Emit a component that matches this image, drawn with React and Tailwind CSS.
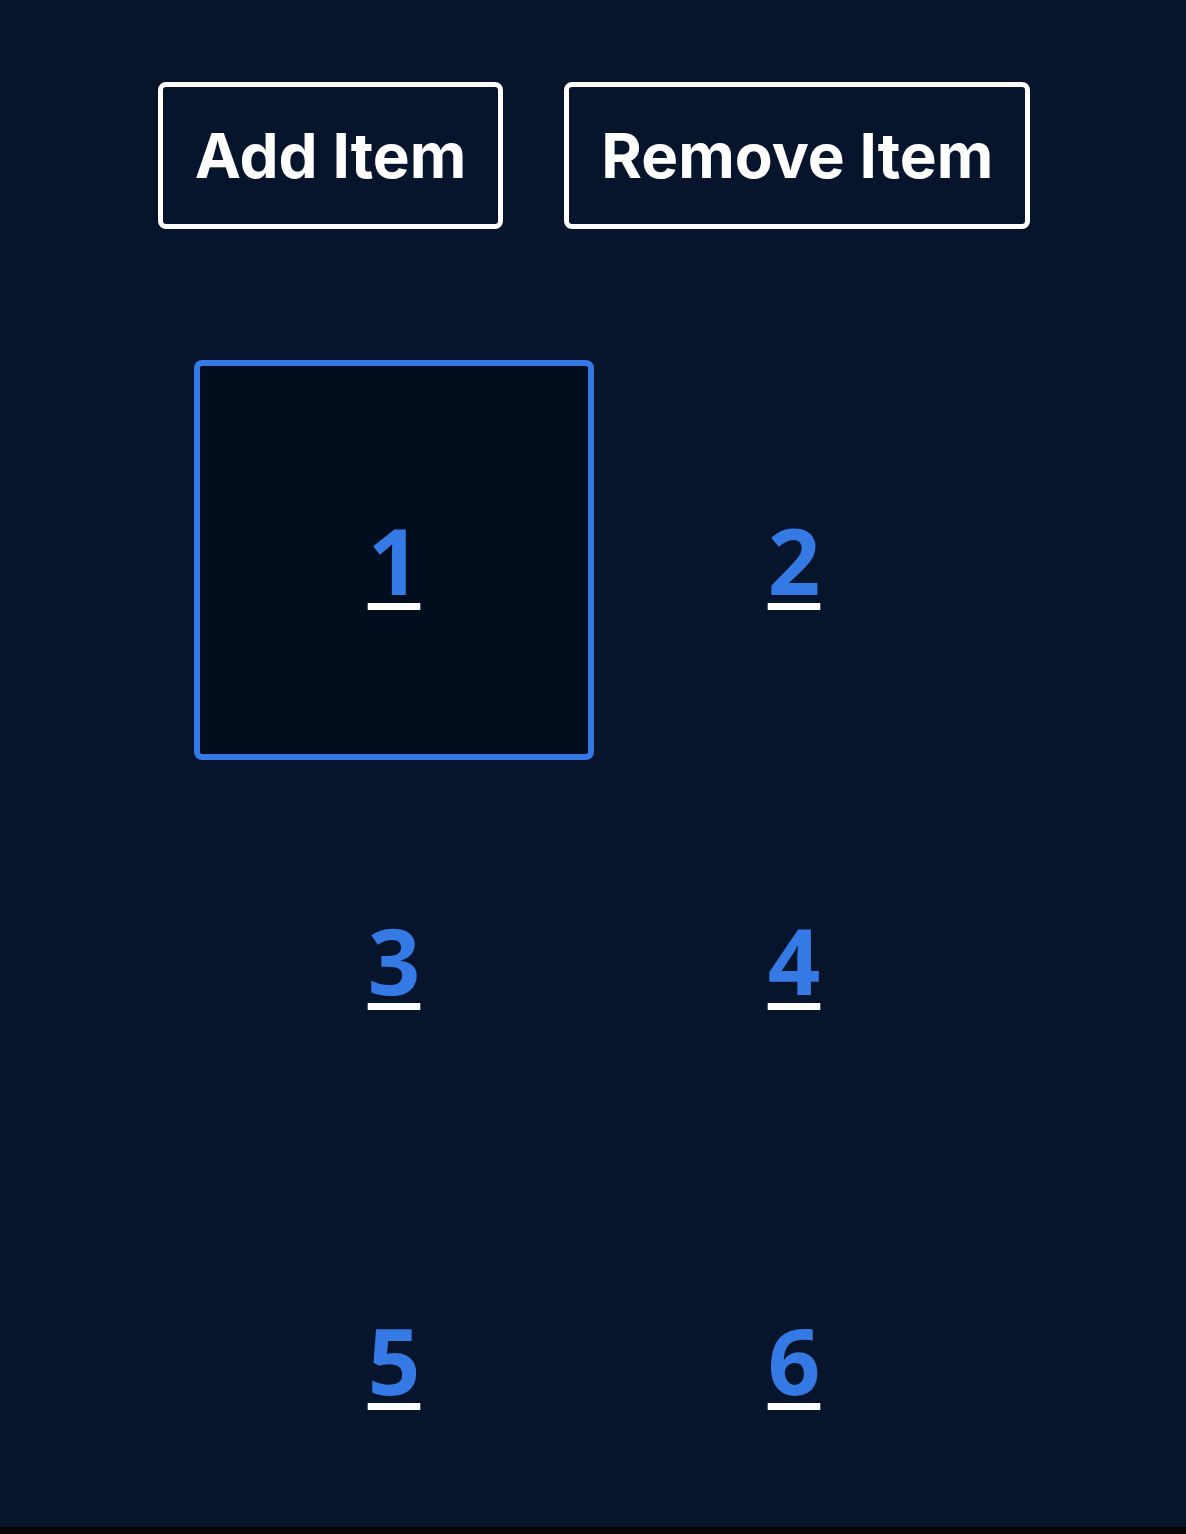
import React from "react";

const items = [1, 2, 3, 4, 5, 6];

export default function App() {
  return (
    <div className="flex flex-col w-full">
      <div className="h-[1527px] overflow-hidden bg-[#06152c]">
        <div className="flex justify-center gap-[61px] pt-[82px] pl-[2px]">
          <button className="border-[5px] border-white rounded-lg px-8 py-8 text-[62px] leading-[73px] font-bold text-white font-['Inter',sans-serif]">
            Add Item
          </button>
          <button className="border-[5px] border-white rounded-lg px-8 py-8 text-[62px] leading-[73px] font-bold text-white font-['Inter',sans-serif]">
            Remove Item
          </button>
        </div>
        <div className="flex justify-center pl-[2px] mt-[131px]">
          <div className="grid w-[800px] grid-cols-[400px_400px] auto-rows-[400px]">
            {items.map((n) => (
              <div
                key={n}
                className={
                  n === 1
                    ? "flex items-center justify-center rounded-lg border-[6px] border-[#3479e4] bg-[#020e1e]"
                    : "flex items-center justify-center"
                }
              >
                <span className="font-['Noto_Sans',sans-serif] font-bold text-[92px] leading-none text-[#3479e4] underline decoration-white decoration-[7px] underline-offset-[8px]">
                  {n}
                </span>
              </div>
            ))}
          </div>
        </div>
      </div>
      <div className="h-[7px] bg-[#060606]" />
    </div>
  );
}
